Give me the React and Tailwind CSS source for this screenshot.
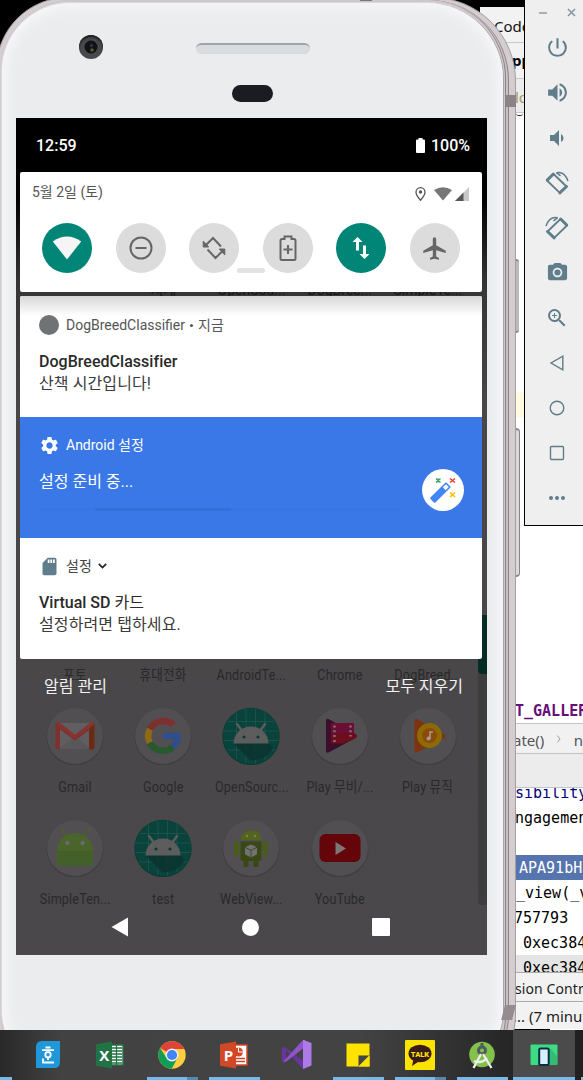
import React from "react";
import { MdPowerSettingsNew, MdVolumeUp, MdVolumeDown, MdCameraAlt, MdZoomIn, MdSettings, MdSdCard, MdAirplanemodeActive } from "react-icons/md";

/* ---------- IDE window behind the emulator ---------- */

const logLines = [
  { text: "sibility", cls: "pl-[35px] text-[#000080]" },
  { text: "ngagement", cls: "pl-[35px] text-black" },
  { text: "", cls: "" },
  { text: "APA91bH", cls: "pl-[39px] bg-[#5674ae] text-white" },
  { text: "_view(_v", cls: "pl-[36px] text-black" },
  { text: "757793", cls: "pl-[34px] text-black" },
  { text: "0xec384", cls: "pl-[43px] text-black" },
  { text: "0xec384", cls: "pl-[43px] bg-[#e4e4e4] text-black" },
];

function IdeWindow() {
  return (
    <div className="absolute left-[480px] top-0 flex h-[1030px] w-[103px] flex-col overflow-hidden whitespace-nowrap bg-white font-['Noto_Sans','Open_Sans',sans-serif]">
      <div className="h-[7px] shrink-0 bg-black" />
      <div className="flex h-[36px] shrink-0 items-center border-b border-[#c8c8c8] bg-[#f2f2f2] pl-[14px] pt-1 text-[15px] text-[#111]">Code</div>
      <div className="flex h-[36px] shrink-0 items-center border-b border-[#c8c8c8] bg-[#f2f2f2] pl-[32px] text-[15px] font-bold text-black">pp</div>
      <div className="flex h-[34px] shrink-0 items-center border-b border-[#c8c8c8] bg-[#ececec] pl-[35px] pt-[3px] text-[15px] text-[#9c9a68]">lo</div>
      <div className="h-[279px] shrink-0 pl-[36px]">
        <div className="h-[3px] w-[7px] rounded-b-full border-b border-[#222]" />
      </div>
      <div className="h-[25px] shrink-0 bg-[#fffae0]" />
      <div className="flex h-[306px] shrink-0 items-end pb-0 pl-[35px] font-['DejaVu_Sans_Mono',monospace] text-[15px] font-bold leading-[24px] text-[#660e7a]">T_GALLERY</div>
      <div className="flex h-[31px] shrink-0 items-center gap-3 border-b border-t border-[#c4c4c4] bg-[#f1f1f1] pl-[33px] pt-1 text-[15px] text-[#555]">
        <span>ate()</span>
        <svg width="8" height="10" viewBox="0 0 8 10" fill="none" stroke="#999" strokeWidth="1.400" className="-mt-1"><path d="M2 0l4 5-4 5" /></svg>
        <span>n</span>
      </div>
      <div className="h-[34px] shrink-0 border-b border-[#c4c4c4] bg-[#ececec]" />
      <div className="h-[184px] shrink-0 overflow-hidden">
        <div className="-mt-[8px] flex flex-col font-['DejaVu_Sans_Mono',monospace] text-[15px]">
          {logLines.map((l, i) => (
            <div key={i} className={"h-[25px] leading-[26px] " + l.cls}>{l.text}</div>
          ))}
        </div>
      </div>
      <div className="flex h-[30px] shrink-0 items-center border-b border-t border-[#aaa] bg-[#f2f2f2] pl-[35px] pt-[2px] text-[14px] tracking-[.1px] text-[#1d1d1d]">sion Control</div>
      <div className="flex h-[27px] shrink-0 items-center bg-[#f2f2f2] pl-[33px] pt-[2px] text-[15px] text-[#1d1d1d]">... (7 minutes</div>
      <div className="h-[2px] w-[70px] shrink-0 bg-black" />
    </div>
  );
}

/* ---------- launcher artwork (dimmed by the notification shade) ---------- */

function GmailArt() {
  return (
    <svg width="58" height="58" viewBox="0 0 58 58">
      <circle cx="29" cy="30" r="28.500" fill="#3f3e40" />
      <circle cx="29" cy="29" r="28" fill="#514f52" />
      <path d="M11 16h36v26H11z" fill="#605e61" />
      <path d="M13 42l16-13 16 13z" fill="#595759" />
      <path d="M43 18v24.500h3q2.500 0 2.500-2V16z" fill="#6b2a14" />
      <path d="M9.500 17v23q0 2.500 2.500 2.500h2V22.500l15 11 15-11v-5l-15 11.200-15-11.500q-3.500-2-4.500-.2z" fill="#7d302d" />
      <path d="M12 16.500L29 30l17.500-13.500" fill="none" stroke="#843431" strokeWidth="3.600" strokeLinejoin="round" strokeLinecap="round" />
    </svg>
  );
}

function GoogleArt() {
  return (
    <svg width="58" height="58" viewBox="0 0 58 58">
      <circle cx="29" cy="30" r="28.500" fill="#3f3e40" />
      <circle cx="29" cy="29" r="28" fill="#514f52" />
      <g fill="none" strokeWidth="6.500">
        <path d="M39.400 18A14.800 14.800 0 0 0 15.900 22.200" stroke="#7d302d" />
        <path d="M15.900 22.200A14.800 14.800 0 0 0 15.900 35.800" stroke="#8c6b12" />
        <path d="M15.900 35.800A14.800 14.800 0 0 0 38.700 40.100" stroke="#28592d" />
        <path d="M38.700 40.100A14.800 14.800 0 0 0 43.700 29" stroke="#304f8a" />
      </g>
      <path d="M29 25.700h17.500v6.500H29z" fill="#304f8a" />
    </svg>
  );
}

function DroidGridArt() {
  return (
    <svg width="58" height="58" viewBox="0 0 58 58">
      <circle cx="29" cy="29.500" r="28.700" fill="#0a3c37" />
      <circle cx="29" cy="29" r="28" fill="#0a433c" />
      <path d="M14.500 6v46M24 1.500v55M33.500 1.500v55M43 5v48M6 14.500h46M1.500 24h55M1.500 33.500h55M5 43h48" stroke="#255750" strokeWidth=".7" />
      <path d="M11.500 36.500L28 53q14 2 23-12l-7-8-20 2z" fill="#0a322d" opacity=".8" />
      <path d="M11.500 36.500a17.500 17 0 0 1 35 0z" fill="#5d5d5e" />
      <path d="M15 17l5 7M43 17l-5 7" stroke="#5d5d5e" strokeWidth="2.400" strokeLinecap="round" />
      <circle cx="22" cy="30" r="1.600" fill="#0a3c37" /><circle cx="36" cy="30" r="1.600" fill="#0a3c37" />
    </svg>
  );
}

function DroidHeadArt() {
  return (
    <svg width="58" height="58" viewBox="0 0 58 58">
      <circle cx="29" cy="30" r="28.500" fill="#3f3e40" />
      <circle cx="29" cy="29" r="28" fill="#514f52" />
      <path d="M16 11l5 7M42 11l-5 7" stroke="#496128" strokeWidth="2" strokeLinecap="round" />
      <path d="M11 32a18 18 0 0 1 36 0v13q0 2-2 2H13q-2 0-2-2z" fill="#4a642b" />
      <path d="M11 32h36v13q0 2-2 2H13q-2 0-2-2z" fill="#44602a" />
      <circle cx="21.500" cy="24" r="2.200" fill="#6a6a6a" /><circle cx="36.500" cy="24" r="2.200" fill="#6a6a6a" />
    </svg>
  );
}

function WebViewArt() {
  return (
    <svg width="58" height="58" viewBox="0 0 58 58">
      <circle cx="29" cy="30" r="28.500" fill="#3f3e40" />
      <circle cx="29" cy="29" r="28" fill="#514f52" />
      <path d="M22 10l3 5M36 10l-3 5" stroke="#4e5f16" strokeWidth="1.300" />
      <path d="M18.500 21a10.500 9.500 0 0 1 21 0z" fill="#53651a" />
      <circle cx="25" cy="17" r="1" fill="#888" /><circle cx="33" cy="17" r="1" fill="#888" />
      <path d="M18.500 22.500h21V40q0 2-2 2h-17q-2 0-2-2z" fill="#394814" />
      <rect x="12.500" y="22" width="4.500" height="15" rx="2" fill="#4b5c14" /><rect x="41" y="22" width="4.500" height="15" rx="2" fill="#4b5c14" />
      <rect x="21.500" y="41" width="5" height="7" rx="1.500" fill="#394814" /><rect x="31.500" y="41" width="5" height="7" rx="1.500" fill="#394814" />
      <path d="M29 25.500l6 2.800v7L29 38.500l-6-3.200v-7z" fill="#727272" />
      <path d="M23 28.300l6 3 6-3M29 31.300v7" stroke="#414a2a" fill="none" />
    </svg>
  );
}

function MoviesArt() {
  return (
    <svg width="58" height="58" viewBox="0 0 58 58">
      <circle cx="29" cy="30" r="28.500" fill="#3f3e40" />
      <circle cx="29" cy="29" r="28" fill="#514f52" />
      <path d="M15 14q0-3 2.500-2L44.500 27q2.500 2 0 4L17.500 45.500Q15 46.500 15 44z" fill="#3a0f2b" />
      <path d="M20 16h23v10l2 1.500q2 1.500-.5 3.500L32 36.500H20z" fill="#6e0d1c" />
      <path d="M20 16h23v10l-23 2z" fill="#6a0e33" />
      <path d="M23.500 18.500v17" stroke="#8e7177" strokeWidth="2.400" strokeDasharray="2 2.800" /><path d="M39.500 18.500v11" stroke="#8e7177" strokeWidth="2.400" strokeDasharray="2 2.800" />
    </svg>
  );
}

function MusicArt() {
  return (
    <svg width="58" height="58" viewBox="0 0 58 58">
      <circle cx="29" cy="30" r="28.500" fill="#3f3e40" />
      <circle cx="29" cy="29" r="28" fill="#514f52" />
      <path d="M15.500 14q0-3 2.500-2L45 27q2.500 2 0 4L18 45.500q-2.500 1-2.500-1.500z" fill="#7d3310" />
      <circle cx="30.500" cy="28.500" r="12.500" fill="#8c6b05" />
      <circle cx="30.500" cy="28.500" r="7.500" fill="#8d4b0b" />
      <path d="M31 32v-7h3" fill="none" stroke="#a69a90" strokeWidth="1.600" /><circle cx="29.500" cy="31.500" r="1.900" fill="#a69a90" />
    </svg>
  );
}

function YoutubeArt() {
  return (
    <svg width="58" height="58" viewBox="0 0 58 58">
      <circle cx="29" cy="30" r="28.500" fill="#3f3e40" />
      <circle cx="29" cy="29" r="28" fill="#514f52" />
      <rect x="8.500" y="15" width="41" height="28" rx="6" fill="#630509" />
      <path d="M24.500 23v13l10.500-6.500z" fill="#7d7778" />
    </svg>
  );
}

const rows = [
  [[null, "포토"], [null, "휴대전화"], [null, "AndroidTe..."], [null, "Chrome"], [null, "DogBreed..."]],
  [[GmailArt, "Gmail"], [GoogleArt, "Google"], [DroidGridArt, "OpenSourc..."], [MoviesArt, "Play 무비/..."], [MusicArt, "Play 뮤직"]],
  [[DroidHeadArt, "SimpleTen..."], [DroidGridArt, "test"], [WebViewArt, "WebView..."], [YoutubeArt, "YouTube"], [null, ""]],
];

function Launcher() {
  return (
    <div className="flex h-[837px] w-[471px] bg-[linear-gradient(180deg,#000_0px,#000_80px,#353535_165px,#484647_290px,#4a484a_837px)]">
      <div className="flex flex-col pl-[15px] pt-[162px]">
        <div className="grid h-[20px] w-[441px] grid-cols-5 text-center font-['Roboto','Noto_Sans_CJK_KR',sans-serif] text-[14px] leading-[20px] text-[#161616]">
          <span /><span>시계</span><span>OpenSou...</span><span>DogBree...</span><span>SimpleTe...</span>
        </div>
        <div className="h-[295px]" />
        {rows.map((r, i) => (
          <div key={i} className="grid h-[112px] w-[441px] grid-cols-5">
            {r.map(([Art, label], j) => (
              <div key={j} className="flex flex-col items-center">
                <div className="h-[69px]">{Art && <Art />}</div>
                <div className="scale-x-[.84] whitespace-nowrap font-['Roboto','Noto_Sans_CJK_KR',sans-serif] text-[15px] leading-[22px] tracking-[.2px] text-[#29282a]">{label}</div>
              </div>
            ))}
          </div>
        ))}
      </div>
      <div className="ml-auto mt-[497px] h-[290px] w-[9px] rounded-b bg-[#3e3d3e]">
        <div className="h-[59px] rounded-l-[4px] bg-[#062c26]" />
      </div>
    </div>
  );
}

/* ---------- notification shade ---------- */

const tiles = [
  { on: true, icon: <svg width="30" height="24" viewBox="0 0 30 24"><path d="M.8 5.500Q15-4.500 29.200 5.500L15 23.500z" fill="#f5f5f5" /></svg> },
  { icon: <svg width="24" height="24" viewBox="0 0 24 24" fill="none" stroke="#666" strokeWidth="2"><circle cx="12" cy="12" r="10.500" /><path d="M6.500 12h11" /></svg> },
  { icon: <svg width="24" height="24" viewBox="0 0 24 24" fill="none" stroke="#666" strokeWidth="2"><path d="M3.500 9.500l7.500-7.500 8 8.500M5.500 13.500l8 8.500 7.500-7.500" /><path d="M1.200 5v6h5.500zM22.800 19v-6h-5.500z" fill="#666" strokeWidth="1" /></svg> },
  { icon: <svg width="18" height="26" viewBox="0 0 18 26" fill="none" stroke="#666" strokeWidth="2"><path d="M3 4h2.500V1.500h7V4H15q1.500 0 1.500 1.500v18q0 1.500-1.500 1.500H3q-1.500 0-1.500-1.500v-18Q1.500 4 3 4zM9 10v9M4.500 14.500h9" /></svg> },
  { on: true, icon: <svg width="18" height="22" viewBox="0 0 18 22" fill="#fff"><path d="M5.500 0l5 5H7v8.500H4V5H.5zM12.500 22l-5-5H11V8.500h3V17h3.500z" /></svg> },
  { icon: <MdAirplanemodeActive size={27} color="#666" /> },
];

function QuickSettings() {
  return (
    <div className="relative h-[120px] rounded-[2px] bg-white">
      <div className="flex h-[52px] items-start justify-between pl-[12px] pr-[13px] pt-[9px]">
        <span className="text-[14px] leading-[22px] text-[#555]">5월 2일 (토)</span>
        <div className="flex items-center gap-[4px] pt-[6px]">
          <svg width="11" height="14" viewBox="0 0 11 14" className="mr-[4px]"><path d="M5.500 13.200Q1 8 1 5.200a4.500 4.500 0 0 1 9 0q0 2.800-4.500 8z" fill="none" stroke="#555" strokeWidth="1.300" /><circle cx="5.500" cy="5" r="1.700" fill="#555" /></svg>
          <svg width="18" height="14" viewBox="0 0 18 14"><path d="M0 3Q9-2.500 18 3L9 13.500z" fill="#777" /></svg>
          <svg width="14" height="14" viewBox="0 0 14 14" className="-ml-px"><path d="M14 0v14H0z" fill="#c8c8c8" /><path d="M8.500 5.500V14H0z" fill="#555" /></svg>
        </div>
      </div>
      <div className="-mt-[1px] ml-[22px] flex w-[418px] justify-between">
        {tiles.map((t, i) => (
          <div key={i} className={"flex h-[50px] w-[50px] items-center justify-center rounded-full " + (t.on ? "bg-[#018577]" : "bg-[#dcdcdc]")}>{t.icon}</div>
        ))}
      </div>
      <div className="absolute left-[217px] top-[96px] h-[5px] w-[28px] rounded-full bg-[#e3e3e3]" />
    </div>
  );
}

function WandBadge() {
  return (
    <svg width="42" height="42" viewBox="0 0 42 42">
      <circle cx="21" cy="21" r="21" fill="#fff" />
      <g transform="rotate(-45 18 24)"><rect x="7" y="20.500" width="23" height="7" rx="1" fill="#4285f4" /><rect x="24" y="22" width="4.500" height="4" fill="#fff" /></g>
      <path d="M14 9.500l4.500 4M14 13.500l4.500-4M16.200 9.500v4" stroke="#34a853" strokeWidth="1.400" />
      <path d="M28 9.500l5 4M28 13.500l5-4" stroke="#ea4335" strokeWidth="1.600" />
      <path d="M28 23.500l5 4.500M28 28l5-4.500" stroke="#fbbc05" strokeWidth="1.600" />
    </svg>
  );
}

function Notifications() {
  return (
    <div className="mt-[4px] overflow-hidden rounded-[2px] bg-white text-[#2a2a2a]">
      <div className="h-[121px] bg-[linear-gradient(180deg,#d8d8d8_0px,#fff_20px)] pl-[19px] pt-[18px]">
        <div className="flex h-[22px] items-center text-[14px] text-[#555]">
          <span className="mr-[7px] h-[20px] w-[20px] rounded-full bg-[#707274]" />
          <span>DogBreedClassifier</span><span className="mx-[5px] h-[3px] w-[3px] rounded-full bg-[#555]" /><span className="text-[14px]">지금</span>
        </div>
        <div className="mt-[15px] text-[16px] font-medium leading-[22px] tracking-[.03px]">DogBreedClassifier</div>
        <div className="text-[16px] leading-[22px] tracking-[.1px] text-[#3b3b3b]">산책 시간입니다!</div>
      </div>
      <div className="flex h-[121px] justify-between bg-[#3b78e7] pl-[19px] pr-[18px] text-white">
        <div className="pt-[17px]">
          <div className="flex h-[22px] items-center text-[14px]"><MdSettings size={21} className="mr-[6px]" />Android 설정</div>
          <div className="mt-[15px] text-[16px] leading-[22px]">설정 준비 중...</div>
          <div className="mt-[15px] h-[3px] w-[362px] bg-[#3976e3]"><div className="ml-[56px] h-[3px] w-[136px] bg-[#336fd8]" /></div>
        </div>
        <div className="-ml-[40px] pt-[52px]"><WandBadge /></div>
      </div>
      <div className="h-[121px] pl-[19px] pt-[17px]">
        <div className="flex h-[22px] items-center text-[14px] text-[#444]">
          <MdSdCard size={21} color="#607d8b" className="mr-[6px]" />설정
          <svg width="9" height="6" viewBox="0 0 9 6" fill="none" stroke="#222" strokeWidth="1.700" className="ml-[6px]"><path d="M.8 .8l3.700 3.700L8.200 .8" /></svg>
        </div>
        <div className="mt-[15px] text-[16px] leading-[22px]"><span className="font-medium">Virtual SD</span> 카드</div>
        <div className="text-[16px] leading-[22px] tracking-[.1px] text-[#3b3b3b]">설정하려면 탭하세요.</div>
      </div>
    </div>
  );
}

function Screen() {
  return (
    <div className="relative ml-[14px] h-[837px] w-[471px] overflow-hidden bg-black">
      <Launcher />
      <div className="absolute inset-0 flex flex-col pl-[4px] pr-[5px] font-['Roboto','Noto_Sans_CJK_KR',sans-serif]">
        <div className="flex h-[54px] items-center justify-between pl-[16px] pr-[12px] pt-[1px] text-[16px] font-medium text-white">
          <span>12:59</span>
          <span className="flex items-center gap-[6px]"><svg width="9" height="15" viewBox="0 0 9 15" fill="#fff"><path d="M2.500 0h4v1.500H8q1 0 1 1V14q0 1-1 1H1q-1 0-1-1V2.500q0-1 1-1h1.500z" /></svg>100%</span>
        </div>
        <QuickSettings />
        <Notifications />
        <div className="flex justify-between px-[24px] pr-[19px] pt-[16px] text-[16px] leading-[24px] text-[#f2f2f2]">
          <span>알림 관리</span><span>모두 지우기</span>
        </div>
        <div className="mb-[18px] mt-auto flex h-[20px] items-center pl-[91px]">
          <svg width="18" height="20" viewBox="0 0 18 20"><path d="M17 .5v19L.5 10z" fill="#fff" /></svg>
          <div className="ml-[113px] h-[17px] w-[17px] rounded-full bg-white" />
          <div className="ml-[113px] h-[18px] w-[18px] rounded-[1px] bg-white" />
        </div>
      </div>
    </div>
  );
}

function Phone() {
  return (
    <div className="absolute -left-[4px] -top-[3px] h-[1090px] w-[520px]">
      <div className="h-full rounded-[72px] rounded-tr-[84px] border border-[#a69da0] bg-[#d3cdcf] pl-[4px] pr-[6px] pt-[2px]">
        <div className="h-full rounded-[71px] rounded-tr-[80px] border-r border-[#8c8386] bg-[#c9c1c4] pl-px pr-[2px]">
        <div className="h-full rounded-[70px] rounded-tr-[78px] border-r border-[#8c8386] bg-[#cfc8ca] pr-[2px] pt-[3px]">
          <div className="h-[1075px] rounded-[68px] rounded-tr-[76px] bg-[#ebecee] shadow-[inset_0_0_12px_5px_#f7f7f9,1px_0_0_0_#aaa2a5,0_0_0_1px_#ddd8da]">
            <div className="flex h-[115px] flex-col">
              <div className="flex items-center pt-[32px]">
                <div className="ml-[77px] flex h-[24px] w-[24px] items-center justify-center rounded-full bg-[#48494d] shadow-[inset_0_2px_2px_#1b1c20]">
                  <svg width="14" height="14" viewBox="0 0 14 14"><circle cx="7" cy="7" r="6.500" fill="#111216" /><circle cx="7.500" cy="5.500" r="1.500" fill="#343849" /><circle cx="8" cy="10" r="1.700" fill="#625b20" /></svg>
                </div>
                <div className="ml-[93px] mt-[2px] h-[11px] w-[114px] rounded-full border-t-2 border-[#9da4ac] bg-[#d9dcdf]" />
              </div>
              <div className="ml-[230px] mt-[26px] h-[17px] w-[41px] rounded-full bg-[#1b1c21]" />
            </div>
            <Screen />
          </div>
        </div>
        </div>
      </div>
      <div className="absolute right-0 top-[98px] h-[12px] w-[11px] bg-[#8b8286]" />
      <div className="absolute right-[2px] top-[1008px] h-[15px] w-[11px] skew-x-[-14deg] bg-[#958c90]" />
      <div className="absolute left-[364px] top-[3px] h-[1px] w-[12px] bg-[#777]" />
      <div className="absolute -right-[3px] top-[262px] h-[74px] w-[3px] rounded-r border-y-2 border-[#888] bg-[#b9bcbc]" />
      <div className="absolute -right-[4px] top-[431px] h-[149px] w-[4px] rounded-r border-y-2 border-r border-[#888] bg-[#d9d9d7]" />
    </div>
  );
}

/* ---------- emulator tool strip ---------- */

function RotateIcon({ flip }) {
  return (
    <svg width="24" height="24" viewBox="0 0 24 24" fill="none" stroke="#607d8b" className={flip ? "-scale-x-100" : ""}>
      <path d="M8.500 3L21.500 15.500 14.800 21.800 2 9.500z" strokeWidth="1.800" strokeLinejoin="round" />
      <path d="M2.300 9l6-6M14.800 21.800l6.700-6.300" strokeWidth="3" strokeLinecap="round" />
      <path d="M11.500 1.700Q19.500 0 23 10" strokeWidth="1.500" /><path d="M11.500 1.600l4 3.200" strokeWidth="1.500" />
    </svg>
  );
}

const tools = [
  <MdPowerSettingsNew size={25} />,
  <MdVolumeUp size={25} />,
  <MdVolumeDown size={24} />,
  <RotateIcon />,
  <RotateIcon flip />,
  <MdCameraAlt size={23} />,
  <MdZoomIn size={24} />,
  <svg width="16" height="16" viewBox="0 0 16 16" fill="none" stroke="currentColor" strokeWidth="1.400"><path d="M13.800 1.200v13.600L2 8z" /></svg>,
  <svg width="16" height="16" viewBox="0 0 16 16" fill="none" stroke="currentColor" strokeWidth="1.400"><circle cx="8" cy="8" r="6.800" /></svg>,
  <svg width="16" height="16" viewBox="0 0 16 16" fill="none" stroke="currentColor" strokeWidth="1.400"><rect x="1.500" y="1.500" width="13" height="13" rx="1" /></svg>,
  <svg width="18" height="6" viewBox="0 0 18 6" fill="currentColor"><circle cx="3" cy="3" r="2" /><circle cx="9" cy="3" r="2" /><circle cx="15" cy="3" r="2" /></svg>,
];

function ToolStrip() {
  return (
    <div className="absolute left-[524px] top-0 h-[526px] w-[59px] border-b border-l border-black bg-[#efefef] text-[#607d8b]">
      <div className="flex h-[25px] items-center justify-between pl-[14px] pr-[7px]">
        <span className="h-[2px] w-[8px] bg-[#a3b1b8]" />
        <svg width="9" height="9" viewBox="0 0 9 9" stroke="#8499a3" strokeWidth="1.600"><path d="M1 1l7 7M8 1L1 8" /></svg>
      </div>
      <div className="flex flex-col pl-[6px]">
        {tools.map((t, i) => <div key={i} className="flex h-[45px] w-[52px] items-center justify-center">{t}</div>)}
      </div>
    </div>
  );
}

/* ---------- desktop task bar ---------- */

function TaskIcon({ kind }) {
  switch (kind) {
    case "hancom":
      return <svg width="24" height="28" viewBox="0 0 24 28"><path d="M6 0h18v21q0 6-6 6H0V6q0-6 6-6z" fill="#1f97d8" /><g fill="none" stroke="#fff" strokeWidth="1.800"><path d="M9.500 6.500h5M6 9.200h12M7 17.500v4h11M12 16v3" /><circle cx="12" cy="13.700" r="2.700" /></g></svg>;
    case "excel":
      return <svg width="28" height="28" viewBox="0 0 28 28"><path d="M14 4h13v20H14z" fill="#fff" stroke="#217346" strokeWidth="1.500" /><path d="M15 7h11M15 10h11M15 13h11M15 16h11M15 19h11M15 22h11M20.500 4v20" stroke="#217346" strokeWidth="1.300" /><path d="M0 3.200L16 .5v27L0 24.800z" fill="#217346" /><text x="3.200" y="20" fontFamily="Open Sans" fontWeight="700" fontSize="15" fill="#fff">X</text></svg>;
    case "chrome":
      return <svg width="28" height="28" viewBox="0 0 28 28"><circle cx="14" cy="14" r="13.700" fill="#ffcd40" /><path d="M14 14L2.100 7.100A13.700 13.700 0 0 1 25.900 7.100V8H14z" fill="#db4437" /><path d="M2.100 7.100A13.700 13.700 0 0 0 13.700 27.700L19.500 17 8.500 17z" fill="#0f9d58" /><circle cx="14" cy="14" r="6.500" fill="#f1f1f1" /><circle cx="14" cy="14" r="5.100" fill="#4285f4" /></svg>;
    case "ppt":
      return <svg width="28" height="28" viewBox="0 0 28 28"><path d="M14 4h13v20H14z" fill="#fff" stroke="#d24726" strokeWidth="1.500" /><circle cx="18.500" cy="11" r="4.500" fill="#d24726" /><path d="M18.500 11V6.500M18.500 11H23" stroke="#fff" /><path d="M16 17.500h9M16 20.500h9" stroke="#d24726" strokeWidth="1.500" /><path d="M0 3.200L16 .5v27L0 24.800z" fill="#d24726" /><text x="3.800" y="20" fontFamily="Open Sans" fontWeight="700" fontSize="15" fill="#fff">P</text></svg>;
    case "vs":
      return <svg width="31" height="31" viewBox="0 0 31 31"><path d="M2 8l4 1.500L25 24v6l-4-1L5 11v13l-4-2V9z" fill="#68359e" /><path d="M2 23l19-21 3-1v7L6 22z" fill="#8d55c9" /><path d="M22 .8L30.500 4v22.500L22 30z" fill="#ad7be8" /></svg>;
    case "note":
      return <svg width="24" height="24" viewBox="0 0 24 24"><path d="M.5.500h23v23H.5z" fill="#fee300" /><path d="M12.500 12.500h11L12.500 23.500z" fill="#454545" /><path d="M23.500 12.500v11h-11z" fill="#fee300" /></svg>;
    case "talk":
      return <svg width="30" height="30" viewBox="0 0 30 30"><rect width="30" height="30" rx="1" fill="#fbe300" /><ellipse cx="15" cy="13.500" rx="11.500" ry="8.800" fill="#391b1b" /><path d="M8.500 19l-1.500 7 6-4z" fill="#391b1b" /><text x="15" y="16.800" textAnchor="middle" fontFamily="Roboto" fontWeight="900" fontSize="7.500" fill="#fbe300">TALK</text></svg>;
    case "studio":
      return <svg width="28" height="28" viewBox="0 0 28 28"><circle cx="14" cy="13.500" r="12.800" fill="#84c14c" /><circle cx="14" cy="9.500" r="3.500" fill="none" stroke="#4d5d5b" strokeWidth="3" /><path d="M14 6V2" stroke="#4d5d5b" strokeWidth="3" /><path d="M13 13L5.500 27M15 13l8.500 14M6 20q8 3 13-3" fill="none" stroke="#eee" strokeWidth="2.300" /></svg>;
    default:
      return <svg width="28" height="22" viewBox="0 0 28 22"><rect x=".5" y=".5" width="27" height="20.500" rx="1" fill="#3ddc84" /><path d="M8 21L20 4l7 8v9z" fill="#32bd75" /><rect x="9.200" y="4.500" width="9.500" height="16.500" rx="1.200" fill="#d8efff" stroke="#073042" strokeWidth="2" /></svg>;
  }
}

const tasks = [
  { kind: "hancom", mark: 0 }, { kind: "excel", mark: 0 }, { kind: "chrome", mark: 2 },
  { kind: "ppt", mark: 1 }, { kind: "vs", mark: 0 }, { kind: "note", mark: 1 },
  { kind: "talk", mark: 2 }, { kind: "studio", mark: 1 }, { kind: "emulator", mark: 3 },
];

function TaskBar() {
  return (
    <div className="absolute left-0 top-[1030px] flex h-[50px] w-[583px] overflow-hidden bg-[linear-gradient(90deg,#292929_0px,#424242_60px,#434343_360px,#262626_510px,#202020_583px)]">
      <div className="flex w-[17px] shrink-0 items-end"><div className="h-[3px] w-[12px] bg-[#76b9ed]" /></div>
      {tasks.map(({ kind, mark }) => (
        <div key={kind} className={"flex h-[50px] w-[62px] shrink-0 flex-col items-center " + (mark === 3 ? "bg-[#4b4b4b]" : "")}>
          <div className="flex h-[47px] items-center justify-center pt-[2px]"><TaskIcon kind={kind} /></div>
          {mark > 0 && (
            <div className={"flex h-[3px] bg-[#76b9ed] " + (mark === 3 ? "w-full" : "w-[51px]")}>
              {mark === 2 && <div className="ml-auto h-[3px] w-[11px] bg-[#5689b0]" />}
            </div>
          )}
        </div>
      ))}
      <div className="ml-[6px] mt-[47px] h-[3px] w-[4px] bg-[#76b9ed]" />
    </div>
  );
}

export default function App() {
  return (
    <div className="relative h-[1080px] w-[583px] overflow-hidden bg-black">
      <IdeWindow />
      <Phone />
      <ToolStrip />
      <TaskBar />
    </div>
  );
}
